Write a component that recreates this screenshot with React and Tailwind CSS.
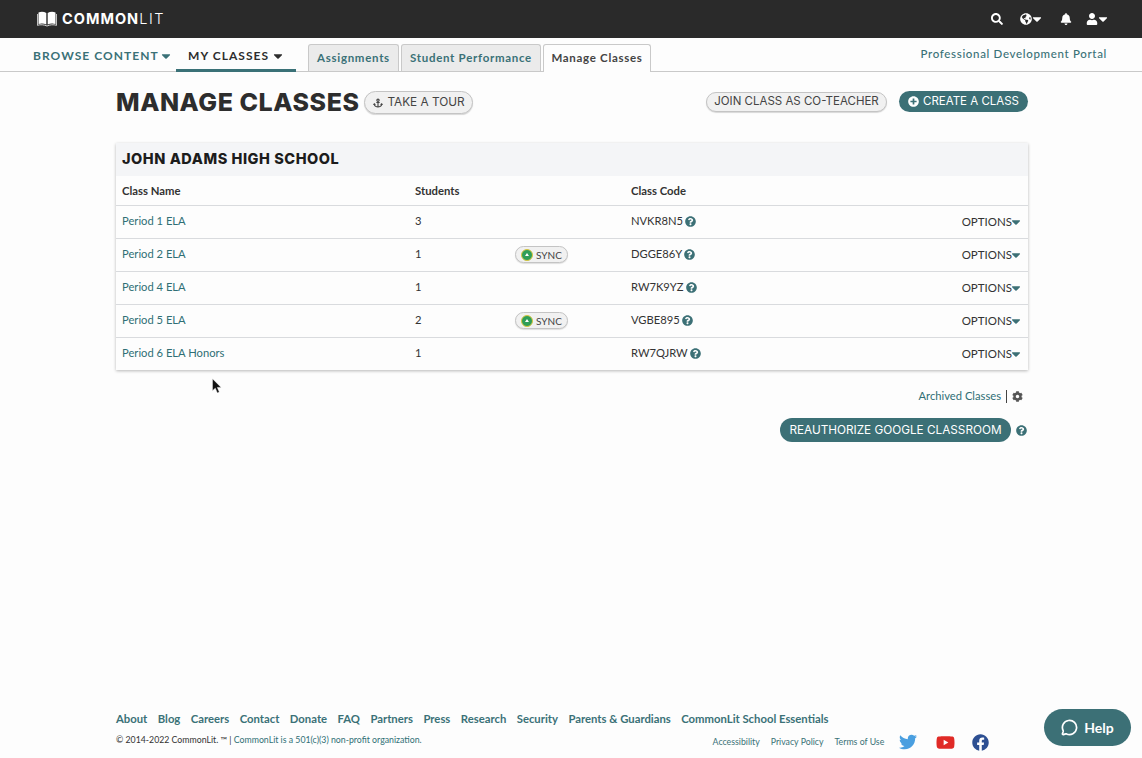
import { FaSearch, FaGlobeAmericas, FaBell, FaUser, FaCaretDown, FaAnchor, FaPlusCircle, FaQuestionCircle, FaCog, FaTwitter, FaYoutube, FaFacebook } from 'react-icons/fa';
import { MessageCircle } from 'lucide-react';

const classes = [
  { name: 'Period 1 ELA', students: 3, code: 'NVKR8N5' },
  { name: 'Period 2 ELA', students: 1, code: 'DGGE86Y', sync: true },
  { name: 'Period 4 ELA', students: 1, code: 'RW7K9YZ' },
  { name: 'Period 5 ELA', students: 2, code: 'VGBE895', sync: true },
  { name: 'Period 6 ELA Honors', students: 1, code: 'RW7QJRW' },
];

const footerLinks = ['About', 'Blog', 'Careers', 'Contact', 'Donate', 'FAQ', 'Partners', 'Press', 'Research', 'Security', 'Parents & Guardians', 'CommonLit School Essentials'];

function BookLogo() {
  return (
    <svg viewBox="0 0 20 16" className="w-[20px] h-[16px]" fill="#fff">
      <path d="M1.5 1.5 C4 .5 7 .6 9.3 2 V13.4 C7 12.2 4 12.1 1.5 12.9 Z" />
      <path d="M18.5 1.5 C16 .5 13 .6 10.7 2 V13.4 C13 12.2 16 12.1 18.5 12.9 Z" />
      <path d="M.4 3 V14.3 C3.6 13.4 7 13.6 10 15 C13 13.6 16.4 13.4 19.6 14.3 V3" fill="none" stroke="#fff" strokeWidth=".8" />
    </svg>
  );
}

function SyncBadge() {
  return (
    <span className="flex items-center gap-[3px] w-[53px] h-[17px] -mt-[1px] pl-[5px] rounded-full border border-[#c4c4c4] bg-[#f1f1f1] text-[10px] text-[#444] shadow-[0_1px_1px_rgba(0,0,0,0.12)]">
      <span className="flex items-center justify-center w-[12px] h-[12px] rounded-full bg-[#2f9e58] border border-[#d8c640]">
        <span className="w-0 h-0 border-x-[2px] border-x-transparent border-b-[3px] border-b-white" />
      </span>
      SYNC
    </span>
  );
}

function ClassRow({ item }) {
  return (
    <div className="flex items-start h-[33px] border-t border-[#d9dbde] pl-[6px] pt-[8px] text-[11.2px] leading-[14px] text-[#333]">
      <a className="w-[293px] text-[#2f6f75]">{item.name}</a>
      <span className="w-[100px]">{item.students}</span>
      <div className="w-[116px]">{item.sync && <SyncBadge />}</div>
      <span className="flex items-center gap-[2px]">
        {item.code}
        <FaQuestionCircle className="text-[11px] text-[#3c7076]" />
      </span>
      <span className="ml-auto mr-[5px] mt-[1px] flex items-center text-[11.5px] text-[#333]">
        OPTIONS
        <FaCaretDown className="-ml-[3px] text-[14px] text-[#3c7076]" />
      </span>
    </div>
  );
}

export default function App() {
  return (
    <div className="relative h-[758px] flex flex-col overflow-hidden bg-[#fdfdfd] font-['Lato',sans-serif]">
      <header className="flex items-center justify-between h-[38px] pl-[37px] pr-[32px] bg-[#2a2a2a] text-white">
        <div className="flex items-center gap-[5px]">
          <BookLogo />
          <span className="font-['Inter',sans-serif] text-[14.5px] tracking-[1px] font-bold">
            COMMON<span className="font-light tracking-[1.6px]">LIT</span>
          </span>
        </div>
        <div className="flex items-center text-[12px]">
          <FaSearch className="mr-[17px]" />
          <FaGlobeAmericas />
          <FaCaretDown className="-ml-[2px] mr-[16px] text-[14px]" />
          <FaBell className="mr-[14px]" />
          <FaUser />
          <FaCaretDown className="-ml-[2px] text-[14px]" />
        </div>
      </header>

      <nav className="flex h-[34px] border-b border-[#c9c9c9]">
        <div className="flex items-center w-[176px] pl-[33px] pt-[3px] text-[12px] font-bold tracking-[1.05px] text-[#3a7177]">
          BROWSE CONTENT
          <FaCaretDown className="text-[14px]" />
        </div>
        <div className="flex items-center w-[120px] h-[34px] pl-[12px] pt-[5px] border-b-[3px] border-[#3a7177] text-[12px] font-bold tracking-[1.05px] text-[#2d2d2d]">
          MY CLASSES
          <FaCaretDown className="ml-[2px] text-[14px]" />
        </div>
        <div className="flex items-end gap-[2px] ml-[12px] h-[33px] text-[11.5px] font-bold tracking-[0.7px]">
          <a className="flex items-center justify-center w-[91px] h-[27px] rounded-t-[3px] border border-b-0 border-[#c9c9c9] bg-[#ebebeb] text-[#3a7177]">Assignments</a>
          <a className="flex items-center justify-center w-[140px] h-[27px] rounded-t-[3px] border border-b-0 border-[#c9c9c9] bg-[#ebebeb] text-[#3a7177]">Student Performance</a>
          <a className="flex items-center justify-center w-[108px] h-[28px] -mb-px rounded-t-[3px] border border-b-0 border-[#c9c9c9] bg-[#fdfdfd] text-[#444] pb-px">Manage Classes</a>
        </div>
        <a className="ml-auto mr-[35px] mt-[9px] text-[11.5px] leading-[14px] font-medium tracking-[0.67px] text-[#3a7177]">Professional Development Portal</a>
      </nav>

      <main className="flex flex-col px-[114px] ml-[2px]">
        <div className="flex items-center h-[31px] mt-[15px] font-['Inter',sans-serif]">
          <h1 className="text-[25px] font-extrabold tracking-[0.55px] text-[#2d2d2d] whitespace-nowrap">MANAGE CLASSES</h1>
          <button className="flex items-center justify-center gap-[4px] w-[109px] h-[23px] ml-[5px] rounded-full border border-[#c4c4c4] bg-[#f1f1f1] text-[11.8px] text-[#444] shadow-[0_1px_1px_rgba(0,0,0,0.15)]">
            <FaAnchor className="text-[10px]" />
            TAKE A TOUR
          </button>
          <button className="flex items-center justify-center w-[181px] h-[20px] ml-auto -mt-[2px] rounded-full border border-[#c4c4c4] bg-[#f1f1f1] text-[11.5px] text-[#444] shadow-[0_1px_1px_rgba(0,0,0,0.15)]">
            JOIN CLASS AS CO-TEACHER
          </button>
          <button className="flex items-center justify-center gap-[4px] w-[129px] h-[21px] ml-[12px] -mt-[2px] rounded-full bg-[#3c7076] text-[11.5px] text-white">
            <FaPlusCircle className="text-[11px]" />
            CREATE A CLASS
          </button>
        </div>

        <section className="w-[912px] mt-[25px] bg-[#fdfdfd] shadow-[0_1px_3px_rgba(0,0,0,0.28)]">
          <h2 className="h-[33px] px-[6px] font-['Inter',sans-serif] text-[14.5px] tracking-[0.55px] leading-[32px] font-extrabold text-[#1c1c1c] bg-[#f4f5f7]">JOHN ADAMS HIGH SCHOOL</h2>
          <div className="flex h-[29px] items-center pl-[6px] pt-[1px] text-[11.3px] font-bold text-[#333]">
            <span className="w-[293px]">Class Name</span>
            <span className="w-[216px]">Students</span>
            <span>Class Code</span>
          </div>
          {classes.map((item) => (
            <ClassRow key={item.code} item={item} />
          ))}
        </section>

        <div className="flex items-center justify-end w-[912px] h-[14px] mt-[19px] text-[11.2px] text-[#2f6f75]">
          Archived Classes
          <span className="w-px h-[13px] mx-[5px] bg-[#444]" />
          <FaCog className="mr-[5px] text-[11px] text-[#555]" />
        </div>
        <div className="flex items-center justify-end w-[912px] mt-[15px]">
          <button className="flex items-center justify-center w-[231px] h-[24px] pt-px rounded-full bg-[#3c7076] font-['Inter',sans-serif] text-[11.75px] text-white">
            REAUTHORIZE GOOGLE CLASSROOM
          </button>
          <FaQuestionCircle className="ml-[5px] mr-[1px] text-[11px] text-[#3c7076]" />
        </div>
      </main>

      <footer className="mt-auto pl-[116px] pb-[9px]">
        <div className="flex gap-[10.45px] text-[11.3px] font-bold leading-[14px] text-[#3a7177]">
          {footerLinks.map((link) => (
            <a key={link}>{link}</a>
          ))}
        </div>
        <div className="flex items-center h-[18px] mt-[5px]">
          <p className="text-[8.75px] text-[#333]">
            © 2014-2022 CommonLit. ™ | <span className="text-[#2f6f75]">CommonLit is a 501(c)(3) non-profit organization.</span>
          </p>
          <div className="flex items-center mt-[4px] ml-[291px] text-[8.75px] text-[#3a7177]">
            <a>Accessibility</a>
            <a className="ml-[11px]">Privacy Policy</a>
            <a className="ml-[11px]">Terms of Use</a>
            <FaTwitter className="ml-[15px] text-[18px] text-[#4a9fe0]" />
            <FaYoutube className="ml-[19px] text-[19px] text-[#e02a26]" />
            <FaFacebook className="ml-[17px] text-[17px] text-[#2d4f92]" />
          </div>
        </div>
      </footer>

      {/* floating help button */}
      <button className="absolute left-[1044px] top-[709px] flex items-center justify-center gap-[6px] w-[87px] h-[37px] rounded-full bg-[#3c7076] text-[14px] font-bold text-white">
        <MessageCircle size={17} strokeWidth={2.4} />
        Help
      </button>

      {/* mouse pointer captured in the shot */}
      <svg viewBox="0 0 12 18" className="absolute left-[212px] top-[378px] w-[11px] h-[17px]">
        <path d="M.5 .5 V13.5 L3.6 10.8 L5.8 16 L8 15 L5.8 10 H10 Z" fill="#111" stroke="#fff" strokeWidth=".5" />
      </svg>
    </div>
  );
}
